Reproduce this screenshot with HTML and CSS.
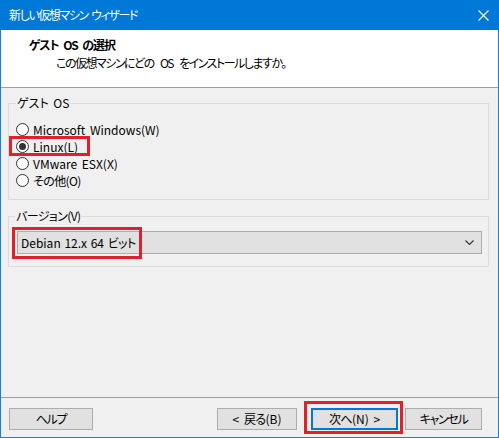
FILE: index.html
```html
<!DOCTYPE html>
<html lang="ja">
<head>
<meta charset="utf-8">
<title>新しい仮想マシン ウィザード</title>
<link rel="stylesheet" href="styles.css">
</head>
<body>
<div class="window">
  <div class="titlebar">
    <span class="title">新しい仮想マシン ウィザード</span>
    <svg class="close" width="11" height="11" viewBox="0 0 11 11"><path d="M0.5 0.5 L10.5 10.5 M10.5 0.5 L0.5 10.5" stroke="#fff" stroke-width="1.1" fill="none"/></svg>
  </div>
  <div class="header">
    <div class="h-title">ゲスト OS の選択</div>
    <div class="h-sub">この仮想マシンにどの OS をインストールしますか。</div>
  </div>
  <div class="content">
    <fieldset class="group group-os">
      <legend>ゲスト OS</legend>
      <div class="radio-row"><span class="radio"></span><span>Microsoft Windows(W)</span></div>
      <div class="radio-row marked"><span class="radio checked"></span><span>Linux(L)</span></div>
      <div class="radio-row"><span class="radio"></span><span>VMware ESX(X)</span></div>
      <div class="radio-row"><span class="radio"></span><span class="jp">その他(O)</span></div>
    </fieldset>
    <fieldset class="group group-ver">
      <legend class="jp">バージョン(V)</legend>
      <div class="select marked">
        <span class="sel-text">Debian 12.x 64 <span class="jp">ビット</span></span>
        <svg class="chev" width="9" height="5" viewBox="0 0 9 5"><path d="M0.5 0.5 L4.5 4.5 L8.5 0.5" stroke="#333" stroke-width="1.1" fill="none"/></svg>
      </div>
    </fieldset>
  </div>
  <div class="footer">
    <button class="btn btn-help"><span class="jp-tight">ヘルプ</span></button>
    <div class="spacer"></div>
    <button class="btn btn-back">&lt; <span class="jp">戻る</span>(B)</button>
    <button class="btn btn-next marked"><span class="jp">次へ</span>(N) &gt;</button>
    <button class="btn btn-cancel"><span class="jp-tight">キャンセル</span></button>
  </div>
</div>
</body>
</html>
```
FILE: styles.css
```css
*, *::before, *::after { box-sizing: border-box; }
html, body { margin: 0; padding: 0; }
body {
  width: 499px;
  height: 438px;
  font-family: "Noto Sans CJK JP", "Noto Sans", sans-serif;
  font-size: 12px;
  color: #000;
  font-feature-settings: "palt";
  word-spacing: 2px;
  background: #f0f0f0;
}
.jp { letter-spacing: -0.6px; }
.jp-tight { letter-spacing: -1.3px; }
.window {
  width: 499px;
  height: 438px;
  border: 1px solid #1a7fd4;
  border-top: none;
  display: flex;
  flex-direction: column;
  background: #f0f0f0;
}
.titlebar {
  height: 30px;
  flex: none;
  background: #0078d7;
  color: #fff;
  display: flex;
  align-items: center;
  justify-content: space-between;
  margin: 0 -1px;
  padding: 0 10px 0 9px;
}
.title { line-height: 16px; letter-spacing: -1.4px; }
.close { display: block; }
.header {
  flex: none;
  height: 58px;
  background: #fff;
  border-bottom: 1px solid #a0a0a0;
  padding-top: 6px;
}
.h-title {
  font-weight: 700;
  line-height: 18px;
  padding-left: 28px;
  letter-spacing: -1.1px;
  word-spacing: 3px;
}
.h-sub {
  line-height: 18px;
  padding-left: 55px;
  letter-spacing: -1.5px;
  word-spacing: 5px;
}
.content {
  flex: 1;
  padding: 0 9px 0 7px;
}
fieldset.group {
  margin: 0;
  border: 1px solid #dcdcdc;
  min-width: 0;
}
fieldset.group legend {
  padding: 0 1px;
  line-height: 16px;
}
.group-os {
  margin-top: 7px !important;
  padding: 10px 6px 10px 7px;
}
.group-ver {
  margin-top: 8px !important;
  padding: 7px 6px 12px 8px;
}
.group-ver legend { margin-left: -2px; }
.radio-row {
  height: 17px;
  display: flex;
  align-items: center;
  gap: 4px;
  position: relative;
  width: max-content;
}
.radio {
  width: 13px;
  height: 13px;
  border: 1px solid #333;
  border-radius: 50%;
  background: #fff;
  position: relative;
  flex: none;
}
.radio.checked::after {
  content: "";
  position: absolute;
  inset: 2px;
  border-radius: 50%;
  background: #333;
}
.radio-row.marked::after {
  content: "";
  position: absolute;
  left: -7px;
  top: -2px;
  width: 81px;
  height: 20px;
  border: 3px solid #e0202b;
}
.select {
  position: relative;
  height: 23px;
  border: 1px solid #adadad;
  background: #e1e1e1;
  display: flex;
  align-items: center;
  justify-content: space-between;
  padding: 0 7px 0 3px;
}
.sel-text { word-spacing: 1px; }
.select.marked::after {
  content: "";
  position: absolute;
  left: -6px;
  top: -5px;
  width: 130px;
  height: 32px;
  border: 3px solid #e0202b;
}
.chev { display: block; }
.footer {
  flex: none;
  height: 40px;
  border-top: 1px solid #a0a0a0;
  padding: 10px 16px 7px 8px;
  display: flex;
  align-items: center;
}
.spacer { flex: 1; }
.btn {
  height: 22px;
  font-family: inherit;
  font-size: 12px;
  font-feature-settings: "palt";
  word-spacing: 2px;
  color: #000;
  background: #e1e1e1;
  border: 1px solid #adadad;
  padding: 0;
  margin: 0;
  line-height: 18px;
  position: relative;
}
.btn-help { width: 84px; }
.btn-back { width: 80px; }
.btn-next {
  width: 87px;
  margin-left: 14px;
  border: 2px solid #0078d7;
}
.btn-cancel { width: 77px; margin-left: 7px; }
.btn-next.marked::after {
  content: "";
  position: absolute;
  left: -9px;
  top: -9px;
  width: 99px;
  height: 33px;
  border: 3px solid #e0202b;
}
```
